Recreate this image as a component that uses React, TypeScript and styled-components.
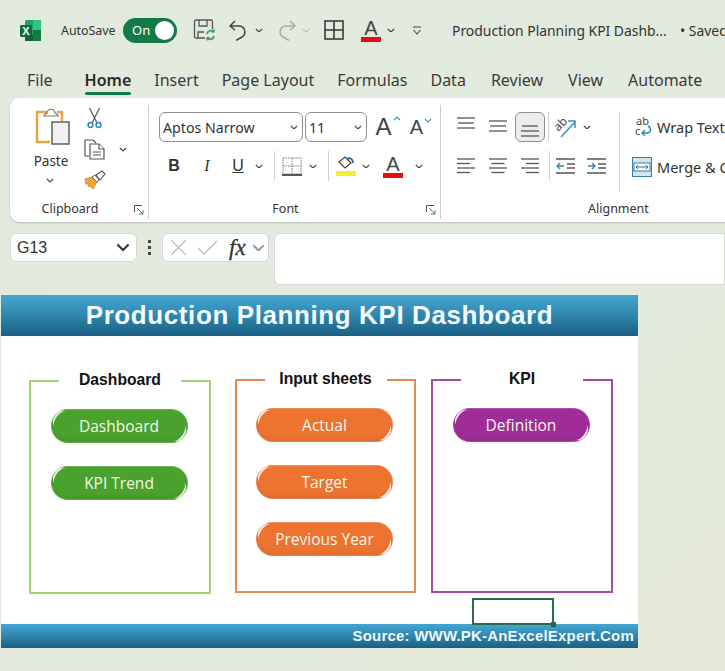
import React from "react";
import styled, { createGlobalStyle } from "styled-components";

const Global = createGlobalStyle`
  html, body { margin: 0; padding: 0; }
  body { background: #e3eadc; font-family: "Noto Sans", "Open Sans", sans-serif; color: #333; }
`;

const Chevron = ({ size = 8, color = "#444" }: { size?: number; color?: string }) => (
  <svg width={size} height={size * 0.6} viewBox="0 0 10 6" fill="none" stroke={color} strokeWidth="1.5">
    <path d="M1 1l4 4 4-4" />
  </svg>
);

const ExcelLogo = () => (
  <svg width="21" height="21" viewBox="0 0 21 21">
    <rect x="5" y="0" width="16" height="21" rx="1.5" fill="#21a366" />
    <rect x="13" y="0" width="8" height="10" fill="#33c481" />
    <rect x="13" y="10" width="8" height="11" fill="#107c41" />
    <rect x="5" y="15" width="8" height="6" fill="#185c37" />
    <rect x="0" y="5" width="12" height="12" rx="1.5" fill="#0f6b3c" />
    <text x="6" y="14.5" textAnchor="middle" fontSize="11" fontWeight="700" fontFamily="Liberation Sans" fill="#fff">X</text>
  </svg>
);

const SaveIcon = () => (
  <svg width="22" height="22" viewBox="0 0 22 22" fill="none" stroke="#555" strokeWidth="1.3">
    <path d="M12 19H3a1.5 1.5 0 0 1-1.5-1.5v-15A1.5 1.5 0 0 1 3 1h15a1.5 1.5 0 0 1 1.5 1.5V10" />
    <path d="M6 1v6h8V1M5 19v-6h6" />
    <path d="M14 15a4 4 0 0 1 7-2M21 17a4 4 0 0 1-7 2" stroke="#3b9c5a" strokeWidth="1.8" />
    <path d="M21 10v3h-3M14 21.500v-3h3" stroke="#3b9c5a" strokeWidth="1.2" />
  </svg>
);

const UndoIcon = ({ color = "#444", flip = false }: { color?: string; flip?: boolean }) => (
  <svg width="20" height="21" viewBox="0 0 20 21" fill="none" stroke={color} strokeWidth="1.5" style={flip ? { transform: "scaleX(-1)" } : undefined}>
    <path d="M7 1L2 6l5 4M2 6h10a6 6 0 0 1 2 11l-6 3.500" />
  </svg>
);

const GridIcon = () => (
  <svg width="20" height="20" viewBox="0 0 20 20" fill="none" stroke="#333" strokeWidth="1.5">
    <rect x="1" y="1" width="18" height="18" />
    <path d="M10 1v18M1 10h18" />
  </svg>
);

const ColorLetter = ({ width = 20, size = 20, bar }: { width?: number; size?: number; bar: string }) => (
  <LetterBox $width={width}>
    <Letter $size={size}>A</Letter>
    <LetterBar $color={bar} />
  </LetterBox>
);

const QatIcon = () => (
  <svg width="10" height="9" viewBox="0 0 10 9" fill="none" stroke="#444" strokeWidth="1.1">
    <path d="M1 1h8M1.500 4l3.500 4 3.500-4" />
  </svg>
);

const PasteIcon = () => (
  <svg width="36" height="40" viewBox="0 0 36 40" fill="none">
    <path d="M12 4H2v30h13" stroke="#eda33f" strokeWidth="2.4" />
    <path d="M22 4h5v9" stroke="#eda33f" strokeWidth="2.4" />
    <path d="M9 8c0-3 2-2 3-3 1-5 7-5 8 0 1 1 3 0 3 3z" fill="#fff" stroke="#777" strokeWidth="1.2" />
    <rect x="17" y="14" width="17" height="22" fill="#f1f1f1" stroke="#555" strokeWidth="1.4" />
  </svg>
);

const ScissorsIcon = () => (
  <svg width="15" height="21" viewBox="0 0 15 21" fill="none">
    <path d="M2.500 0L10 15M12.500 0L5 15" stroke="#555" strokeWidth="1.2" />
    <circle cx="3.500" cy="17" r="2.400" stroke="#2e86b5" strokeWidth="1.500" />
    <circle cx="11.500" cy="17" r="2.400" stroke="#2e86b5" strokeWidth="1.500" />
  </svg>
);

const CopyIcon = () => (
  <svg width="21" height="21" viewBox="0 0 21 21" fill="#fff" stroke="#555" strokeWidth="1.2">
    <path d="M5 17H1V1h8l3 3" />
    <path d="M6 5h9l5 5v10H6z" />
    <path d="M15 5v5h5M9 13h8M9 16h8" />
  </svg>
);

const BrushIcon = () => (
  <svg width="22" height="20" viewBox="0 0 22 20" fill="none">
    <path d="M1 9l7-2 5 5-4 7-3-3-1 1-1-3-2 0z" fill="#eda33f" stroke="#d98f2f" strokeWidth="1" />
    <path d="M8 7l3-2 4 5-2 2z" fill="#fff" stroke="#666" strokeWidth="1" />
    <path d="M12 5l6-4 3 3-5 6z" fill="#fff" stroke="#555" strokeWidth="1.1" />
  </svg>
);

const Launcher = () => (
  <svg width="10" height="10" viewBox="0 0 10 10" fill="none" stroke="#555" strokeWidth="1">
    <path d="M.5 7V.5H8" />
    <path d="M3 3l6 6M9 5v4H5" stroke="#3a7ca5" />
  </svg>
);

const GrowIcon = ({ up, size }: { up: boolean; size: number }) => (
  <GrowBox>
    <Letter $size={size}>A</Letter>
    <svg width="8" height="5" viewBox="0 0 8 5" fill="none" stroke="#4a90b8" strokeWidth="1.2">
      <path d={up ? "M1 4l3-3 3 3" : "M1 1l3 3 3-3"} />
    </svg>
  </GrowBox>
);

const BorderIcon = () => (
  <svg width="20" height="19" viewBox="0 0 20 19" fill="none" stroke="#777" strokeWidth="1" strokeDasharray="1.500 1">
    <rect x="1" y="1" width="18" height="16" />
    <path d="M10 1v16M1 9h18" />
    <path d="M0 18h20" stroke="#333" strokeWidth="1.6" strokeDasharray="none" />
  </svg>
);

const FillIcon = () => (
  <FillBox>
    <svg width="17" height="13" viewBox="0 0 17 13" fill="none">
      <path d="M1 6l6-5 6 6-6 5z" stroke="#444" strokeWidth="1.2" fill="#fff" />
      <path d="M9 3c3-2 6 0 6 4" stroke="#2d6f99" strokeWidth="2" />
    </svg>
    <LetterBar $color="#f4ee33" />
  </FillBox>
);

const Lines = ({ rows, shortRows = [] }: { rows: number[]; shortRows?: number[] }) => (
  <svg width="20" height="20" viewBox="0 0 20 20" stroke="#555" strokeWidth="1.3">
    {rows.map((y, i) => (
      <path key={y} d={shortRows[i] ? `M${shortRows[i]} ${y}h${20 - 2 * shortRows[i]}` : `M1 ${y}h18`} />
    ))}
  </svg>
);

const AlignText = ({ side }: { side: "left" | "center" | "right" }) => {
  const d = (y: number, w: number) => {
    const x = side === "left" ? 1 : side === "right" ? 19 - w : 10 - w / 2;
    return `M${x} ${y}h${w}`;
  };
  return (
    <svg width="20" height="20" viewBox="0 0 20 20" stroke="#555" strokeWidth="1.3">
      <path d={d(3, 18)} />
      <path d={d(7.500, 13)} />
      <path d={d(12, 18)} />
      <path d={d(16.500, 13)} />
    </svg>
  );
};

const OrientIcon = () => (
  <svg width="24" height="24" viewBox="0 0 24 24" fill="none" overflow="visible">
    <text x="0" y="13" fontSize="12" fontFamily="Noto Sans" fill="#444" transform="rotate(-45 7 10)">ab</text>
    <path d="M7 22L21 7M14 6h7v7" stroke="#3a93bf" strokeWidth="1.500" />
  </svg>
);

const IndentIcon = ({ out }: { out: boolean }) => (
  <svg width="19" height="18" viewBox="0 0 19 18" fill="none" stroke="#555" strokeWidth="1.3">
    <path d="M0 2h19M0 16h19M11 7h8M11 11h8" />
    <path d={out ? "M8 9H1M4 6L1 9l3 3" : "M1 9h7M5 6l3 3-3 3"} stroke="#2e86b5" />
  </svg>
);

const WrapIcon = () => (
  <svg width="17" height="22" viewBox="0 0 17 22" fill="none" overflow="visible">
    <text x="1" y="9" fontSize="11" fontFamily="Noto Sans" fill="#444">ab</text>
    <text x="0" y="19" fontSize="11" fontFamily="Noto Sans" fill="#444">c</text>
    <path d="M13 10c4 2 3 7-1 7H7M10 14l-3 3 3 3" stroke="#2e86b5" strokeWidth="1.400" />
  </svg>
);

const MergeIcon = () => (
  <svg width="20" height="20" viewBox="0 0 20 20" fill="none">
    <rect x=".5" y=".5" width="19" height="19" fill="#cfe6f2" stroke="#3a7ca5" />
    <rect x="2" y="6" width="16" height="8" fill="#fff" stroke="#3a7ca5" />
    <path d="M4 10h12M6 8l-2 2 2 2M14 8l2 2-2 2" stroke="#2e6f99" strokeWidth="1" />
  </svg>
);

const CrossIcon = () => (
  <svg width="17" height="17" viewBox="0 0 17 17" stroke="#bbb" strokeWidth="1.300"><path d="M1 1l15 15M16 1L1 16" /></svg>
);

const CheckIcon = () => (
  <svg width="21" height="15" viewBox="0 0 21 15" fill="none" stroke="#bbb" strokeWidth="1.300"><path d="M1 8l6 6L20 1" /></svg>
);

const App = () => {
  return (
    <Screen>
      <Global />
      <TitleBar>
        <LogoSlot><ExcelLogo /></LogoSlot>
        <AutoSave>AutoSave</AutoSave>
        <Toggle><span>On</span><Knob /></Toggle>
        <Slot $w={22} $left={16}><SaveIcon /></Slot>
        <Slot $w={20} $left={13}><UndoIcon /></Slot>
        <Slot $w={22}><Chevron /></Slot>
        <Slot $w={20} $left={7}><UndoIcon color="#aaa" flip /></Slot>
        <Slot $w={18}><Chevron color="#bbb" /></Slot>
        <Slot $w={20} $left={9}><GridIcon /></Slot>
        <Slot $w={20} $left={17}><ColorLetter bar="#e01010" /></Slot>
        <Slot $w={20}><Chevron /></Slot>
        <Slot $w={20} $left={6}><QatIcon /></Slot>
        <FileName>Production Planning KPI Dashb...</FileName>
        <Saved>• Saved</Saved>
      </TitleBar>

      <Tabs>
        <Tab>File</Tab>
        <Tab $active $left={9}>Home</Tab>
        <Tab>Insert</Tab>
        <Tab>Page Layout</Tab>
        <Tab>Formulas</Tab>
        <Tab>Data</Tab>
        <Tab $left={2}>Review</Tab>
        <Tab $left={2}>View</Tab>
        <Tab $left={2}>Automate</Tab>
      </Tabs>

      <Ribbon>
        <Group $w={139}>
          <ClipBody>
            <PasteColumn>
              <PasteIcon />
              <PasteLabel>Paste</PasteLabel>
              <PasteChevron><Chevron /></PasteChevron>
            </PasteColumn>
            <ClipTools>
              <ScissorsIcon />
              <CopyRow><CopyIcon /><Chevron /></CopyRow>
              <BrushIcon />
            </ClipTools>
          </ClipBody>
          <GroupFooter>Clipboard<LauncherSlot><Launcher /></LauncherSlot></GroupFooter>
        </Group>

        <Group $w={292}>
          <FontBody>
            <ToolRow>
              <SelectBox $w={144}>Aptos Narrow<Chevron /></SelectBox>
              <SelectBox $w={62} $left={2}>11<Chevron /></SelectBox>
              <Slot $w={30} $left={6}><GrowIcon up size={24} /></Slot>
              <Slot $w={30} $left={3}><GrowIcon up={false} size={20} /></Slot>
            </ToolRow>
            <ToolRow>
              <Slot $w={30}><BoldMark>B</BoldMark></Slot>
              <Slot $w={36}><ItalicMark>I</ItalicMark></Slot>
              <Slot $w={26}><UnderMark>U</UnderMark></Slot>
              <Slot $w={16}><Chevron /></Slot>
              <Slot $w={14}><Divider /></Slot>
              <Slot $w={22}><BorderIcon /></Slot>
              <Slot $w={20}><Chevron /></Slot>
              <Slot $w={10}><Divider /></Slot>
              <Slot $w={26}><FillIcon /></Slot>
              <Slot $w={14}><Chevron /></Slot>
              <Slot $w={40}><ColorLetter bar="#e01010" /></Slot>
              <Slot $w={12}><Chevron /></Slot>
            </ToolRow>
          </FontBody>
          <GroupFooter>Font<LauncherSlot><Launcher /></LauncherSlot></GroupFooter>
        </Group>

        <Group $w={300} $last>
          <AlignBody>
            <AlignGrid>
              <ToolRow>
                <Slot $w={32}><Lines rows={[1, 6, 11]} shortRows={[0, 2, 0]} /></Slot>
                <Slot $w={32}><Lines rows={[4, 9, 14]} shortRows={[0, 2, 0]} /></Slot>
                <SelectedTool><Lines rows={[9, 14, 19]} shortRows={[2, 0, 0]} /></SelectedTool>
                <Slot $w={6}><Divider /></Slot>
                <Slot $w={30}><OrientIcon /></Slot>
                <Slot $w={12}><Chevron /></Slot>
              </ToolRow>
              <ToolRow>
                <Slot $w={32}><AlignText side="left" /></Slot>
                <Slot $w={32}><AlignText side="center" /></Slot>
                <Slot $w={32}><AlignText side="right" /></Slot>
                <Slot $w={6}><Divider /></Slot>
                <Slot $w={26}><IndentIcon out /></Slot>
                <Slot $w={36}><IndentIcon out={false} /></Slot>
              </ToolRow>
            </AlignGrid>
            <TallDivider />
            <WrapColumn>
              <WrapItem $left={15}><WrapIcon />Wrap Text</WrapItem>
              <WrapItem $left={12}><MergeIcon />Merge &amp; Center</WrapItem>
            </WrapColumn>
          </AlignBody>
          <AlignFooter>Alignment</AlignFooter>
        </Group>
      </Ribbon>

      <FormulaBar>
        <NameBox>G13<Chevron size={14} color="#333" /></NameBox>
        <Dots>
          <i /><i /><i />
        </Dots>
        <FxBox>
          <CrossIcon />
          <CheckIcon />
          <FxMark>fx</FxMark>
          <Chevron size={13} color="#999" />
        </FxBox>
        <FormulaInput />
      </FormulaBar>

      <Sheet>
        <Banner>Production Planning KPI Dashboard</Banner>
        <Board>
          <Card $color="#a4d471" $w={182} $down={1}>
            <CardTitle>Dashboard</CardTitle>
            <Pill $color="#4aa12e">Dashboard</Pill>
            <Pill $color="#4aa12e">KPI Trend</Pill>
          </Card>
          <Card $color="#e98a52" $w={181} $left={24}>
            <CardTitle>Input sheets</CardTitle>
            <Pill $color="#ec7330">Actual</Pill>
            <Pill $color="#ec7330">Target</Pill>
            <Pill $color="#ec7330">Previous Year</Pill>
          </Card>
          <Card $color="#a24c9e" $w={182} $left={15}>
            <CardTitle>KPI</CardTitle>
            <Pill $color="#a02c97">Definition</Pill>
          </Card>
        </Board>
        <SelectedCell />
        <SourceBar>Source: WWW.PK-AnExcelExpert.Com</SourceBar>
      </Sheet>
    </Screen>
  );
};

export default App;

const Screen = styled.div`
  position: relative;
  width: 725px;
  height: 671px;
  overflow: hidden;
  background: linear-gradient(135deg, #e2eadd 0%, #e2ebdd 60%, #e6ead7 100%);
`;

const TitleBar = styled.div`
  display: flex;
  align-items: center;
  height: 60px;
  white-space: nowrap;
`;

const LogoSlot = styled.div`
  display: flex;
  flex: none;
  margin-left: 20px;
  width: 41px;
`;

const AutoSave = styled.span`
  flex: none;
  font-size: 12.400px;
  width: 62px;
`;

const Toggle = styled.div`
  display: flex;
  align-items: center;
  justify-content: space-between;
  flex: none;
  box-sizing: border-box;
  width: 54px;
  height: 25px;
  padding: 0 3px 0 9px;
  border-radius: 13px;
  background: #157a4a;
  color: #fff;
  font-size: 13px;
`;

const Knob = styled.i`
  display: block;
  width: 19px;
  height: 19px;
  border-radius: 50%;
  background: #fff;
`;

const Slot = styled.div<{ $w: number; $left?: number }>`
  display: flex;
  align-items: center;
  justify-content: center;
  flex: none;
  width: ${(p) => p.$w}px;
  margin-left: ${(p) => p.$left ?? 0}px;
`;

const FileName = styled.span`
  margin-left: 25px;
  font-size: 13.900px;
  width: 228px;
  flex: none;
`;

const Saved = styled.span`
  flex: none;
  font-size: 13.900px;
`;

const LetterBox = styled.div<{ $width: number }>`
  display: flex;
  flex-direction: column;
  align-items: center;
  width: ${(p) => p.$width}px;
`;

const Letter = styled.span<{ $size: number }>`
  font-family: "Liberation Sans", sans-serif;
  font-size: ${(p) => p.$size}px;
  line-height: ${(p) => p.$size - 2}px;
  color: #444;
`;

const LetterBar = styled.i<{ $color: string }>`
  display: block;
  width: 100%;
  height: 5px;
  background: ${(p) => p.$color};
`;

const Tabs = styled.nav`
  display: flex;
  gap: 23px;
  height: 38px;
  padding-left: 27px;
  font-size: 16px;
  box-sizing: border-box;
`;

const Tab = styled.div<{ $active?: boolean; $left?: number }>`
  position: relative;
  line-height: 40px;
  font-weight: ${(p) => (p.$active ? 600 : 400)};
  margin-left: ${(p) => p.$left ?? 0}px;
  color: ${(p) => (p.$active ? "#2a2a2a" : "#3a3a3a")};
  &::after {
    content: "";
    display: ${(p) => (p.$active ? "block" : "none")};
    position: absolute;
    left: 0;
    right: 0;
    top: 32px;
    height: 3px;
    border-radius: 2px;
    background: #157a4a;
  }
`;

const Ribbon = styled.div`
  display: flex;
  box-sizing: border-box;
  width: 725px;
  height: 124px;
  margin-left: 10px;
  padding-top: 7px;
  background: #fff;
  border-radius: 9px 0 0 9px;
  box-shadow: 0 1px 2px #bbb;
`;

const Group = styled.div<{ $w: number; $last?: boolean }>`
  display: flex;
  flex-direction: column;
  flex: none;
  box-sizing: border-box;
  width: ${(p) => p.$w}px;
  height: 114px;
  border-right: ${(p) => (p.$last ? "none" : "1px solid #cdcdcd")};
`;

const ClipBody = styled.div`
  display: flex;
  height: 92px;
  padding-top: 3px;
`;

const PasteColumn = styled.div`
  display: flex;
  flex-direction: column;
  align-items: center;
  width: 38px;
  margin-left: 24px;
`;

const PasteLabel = styled.span`
  font-size: 13.500px;
  margin: 4px 4px 8px 0;
  line-height: 18px;
`;

const PasteChevron = styled.span`
  display: flex;
  margin-right: 6px;
`;

const ClipTools = styled.div`
  display: flex;
  flex-direction: column;
  align-items: flex-start;
  gap: 10px;
  margin-left: 12px;
  > svg:first-child {
    margin-left: 3px;
  }
`;

const CopyRow = styled.div`
  display: flex;
  align-items: center;
  gap: 14px;
`;

const GroupFooter = styled.div`
  position: relative;
  margin-top: auto;
  height: 20px;
  padding-right: 18px;
  text-align: center;
  font-size: 12.500px;
  line-height: 20px;
`;

const AlignFooter = styled(GroupFooter)`
  text-align: left;
  padding-left: 147px;
  padding-right: 0;
`;

const LauncherSlot = styled.span`
  position: absolute;
  right: 4px;
  top: 6px;
  display: flex;
`;

const FontBody = styled.div`
  display: flex;
  flex-direction: column;
  gap: 9px;
  padding: 7px 0 0 10px;
`;

const ToolRow = styled.div`
  display: flex;
  align-items: center;
  height: 30px;
`;

const SelectBox = styled.div<{ $w: number; $left?: number }>`
  display: flex;
  align-items: center;
  justify-content: space-between;
  flex: none;
  box-sizing: border-box;
  width: ${(p) => p.$w}px;
  height: 30px;
  margin-left: ${(p) => p.$left ?? 0}px;
  padding: 0 4px 0 3px;
  border: 1px solid #8f8f8f;
  border-radius: 6px;
  font-size: 14.200px;
`;

const GrowBox = styled.div`
  display: flex;
  align-items: flex-start;
  gap: 1px;
`;

const BoldMark = styled.b`
  font-family: "Liberation Sans", sans-serif;
  font-size: 16px;
`;

const ItalicMark = styled.i`
  font-family: "Liberation Serif", serif;
  font-size: 16px;
`;

const UnderMark = styled.u`
  font-family: "Liberation Sans", sans-serif;
  font-size: 16px;
`;

const Divider = styled.i`
  display: block;
  width: 1px;
  height: 30px;
  background: #d0d0d0;
`;

const FillBox = styled.div`
  display: flex;
  flex-direction: column;
  align-items: center;
  gap: 2px;
  width: 20px;
`;

const AlignBody = styled.div`
  display: flex;
  height: 92px;
  padding-top: 7px;
  box-sizing: border-box;
`;

const AlignGrid = styled.div`
  display: flex;
  flex-direction: column;
  flex: none;
  gap: 9px;
  width: 169px;
  margin-left: 9px;
`;

const SelectedTool = styled.div`
  display: flex;
  align-items: center;
  justify-content: center;
  flex: none;
  box-sizing: border-box;
  width: 30px;
  height: 30px;
  margin-left: 1px;
  border: 1px solid #8f8f8f;
  border-radius: 6px;
  background: #ececec;
`;

const TallDivider = styled.i`
  display: block;
  flex: none;
  width: 1px;
  height: 80px;
  background: #d0d0d0;
`;

const WrapColumn = styled.div`
  display: flex;
  flex-direction: column;
  flex: none;
  gap: 14px;
  padding-top: 2px;
  white-space: nowrap;
`;

const WrapItem = styled.div<{ $left: number }>`
  display: flex;
  align-items: center;
  gap: 5px;
  height: 26px;
  margin-left: ${(p) => p.$left}px;
  font-size: 14.500px;
`;

const FormulaBar = styled.div`
  display: flex;
  align-items: flex-start;
  height: 52px;
  margin-top: 11px;
  margin-left: 10px;
`;

const NameBox = styled.div`
  display: flex;
  align-items: center;
  justify-content: space-between;
  box-sizing: border-box;
  width: 127px;
  height: 29px;
  padding: 0 6px;
  background: #fff;
  border: 1px solid #d4d8d0;
  border-radius: 6px;
  font-family: "Liberation Sans", sans-serif;
  font-size: 16px;
`;

const Dots = styled.div`
  display: flex;
  flex-direction: column;
  gap: 3px;
  width: 25px;
  height: 29px;
  align-items: center;
  justify-content: center;
  i {
    display: block;
    width: 3px;
    height: 3px;
    background: #444;
  }
`;

const FxBox = styled.div`
  display: flex;
  align-items: center;
  gap: 10px;
  box-sizing: border-box;
  width: 107px;
  height: 29px;
  padding: 0 3px 0 7px;
  background: #fff;
  border: 1px solid #d4d8d0;
  border-radius: 6px;
`;

const FxMark = styled.i`
  font-family: "Liberation Serif", serif;
  font-size: 23px;
  color: #333;
  -webkit-text-stroke: 0.3px #333;
  margin-left: 1px;
  margin-right: -5px;
  width: 18px;
`;

const FormulaInput = styled.div`
  box-sizing: border-box;
  flex: 1;
  height: 52px;
  margin-left: 5px;
  background: #fff;
  border: 1px solid #d4d8d0;
  border-radius: 6px 0 0 6px;
`;

const Sheet = styled.div`
  position: relative;
  width: 637px;
  margin-top: 10px;
  margin-left: 1px;
  background: #fff;
`;

const Banner = styled.h1`
  margin: 0;
  height: 41px;
  background: linear-gradient(180deg, #45a6d3 0%, #2f86ad 50%, #1a5f83 100%);
  color: #f4fbff;
  font-family: "Liberation Sans", sans-serif;
  font-size: 26px;
  font-weight: 700;
  line-height: 41px;
  letter-spacing: 0.6px;
  text-align: center;
`;

const Board = styled.div`
  display: flex;
  box-sizing: border-box;
  height: 288px;
  padding: 43px 0 0 28px;
`;

const Card = styled.section<{ $color: string; $w: number; $left?: number; $down?: number }>`
  display: flex;
  flex-direction: column;
  align-items: center;
  gap: 23px;
  box-sizing: border-box;
  width: ${(p) => p.$w}px;
  height: 214px;
  margin-left: ${(p) => p.$left ?? 0}px;
  margin-top: ${(p) => p.$down ?? 0}px;
  border: 2px solid ${(p) => p.$color};
`;

const CardTitle = styled.h2`
  box-sizing: border-box;
  width: 122px;
  height: 26px;
  margin: -15px 0 -7px;
  background: #fff;
  color: #111;
  font-family: "Liberation Sans", sans-serif;
  font-size: 15.700px;
  font-weight: 700;
  line-height: 26px;
  text-align: center;
`;

const Pill = styled.button<{ $color: string }>`
  position: relative;
  flex: none;
  width: 137px;
  height: 34px;
  margin-right: 2px;
  border: none;
  border-radius: 17px;
  background: ${(p) => p.$color};
  box-shadow: inset 0 0 0 1px rgba(255, 255, 255, 0.18), inset 0 -3px 4px rgba(0, 0, 0, 0.08);
  color: #f2f8ea;
  font-family: "Open Sans", sans-serif;
  font-size: 15.500px;
  padding: 0;
  &::before,
  &::after {
    content: "";
    position: absolute;
    width: 10px;
    height: 18px;
    border-radius: 50%;
    border-left: 2px solid rgba(255, 255, 255, 0.85);
  }
  &::before {
    left: 3px;
    top: 1px;
    transform: rotate(35deg);
  }
  &::after {
    right: 3px;
    bottom: 1px;
    transform: rotate(215deg);
  }
`;

const SelectedCell = styled.div`
  position: absolute;
  left: 471px;
  top: 303px;
  box-sizing: border-box;
  width: 82px;
  height: 27px;
  border: 2px solid #2a6b4f;
  &::after {
    content: "";
    position: absolute;
    right: -4px;
    bottom: -4px;
    width: 5px;
    height: 5px;
    background: #1f6b45;
  }
`;

const SourceBar = styled.footer`
  height: 24px;
  padding-right: 4px;
  background: linear-gradient(180deg, #45a6d3 0%, #2f86ad 50%, #1a5f83 100%);
  color: #eef8fd;
  font-family: "Liberation Sans", sans-serif;
  font-size: 15px;
  font-weight: 700;
  letter-spacing: 0.2px;
  line-height: 24px;
  text-align: right;
`;
